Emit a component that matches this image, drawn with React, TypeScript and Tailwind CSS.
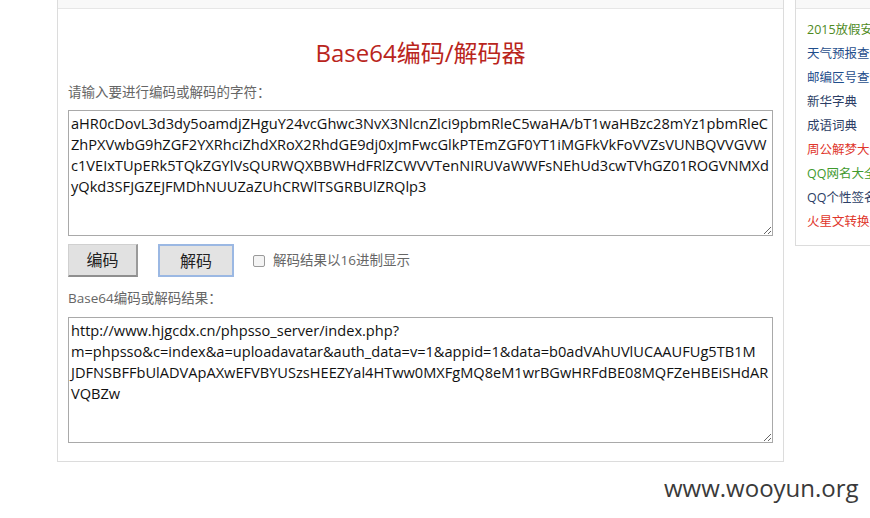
import React from "react";

const input = [
  "aHR0cDovL3d3dy5oamdjZHguY24vcGhwc3NvX3NlcnZlci9pbmRleC5waHA/bT1waHBzc28mYz1pbmRleC",
  "ZhPXVwbG9hZGF2YXRhciZhdXRoX2RhdGE9dj0xJmFwcGlkPTEmZGF0YT1iMGFkVkFoVVZsVUNBQVVGVW",
  "c1VEIxTUpERk5TQkZGYlVsQURWQXBBWHdFRlZCWVVTenNIRUVaWWFsNEhUd3cwTVhGZ01ROGVNMXd",
  "yQkd3SFJGZEJFMDhNUUZaZUhCRWlTSGRBUlZRQlp3",
].join("\n");

const output = [
  "http://www.hjgcdx.cn/phpsso_server/index.php?",
  "m=phpsso&c=index&a=uploadavatar&auth_data=v=1&appid=1&data=b0adVAhUVlUCAAUFUg5TB1M",
  "JDFNSBFFbUlADVApAXwEFVBYUSzsHEEZYal4HTww0MXFgMQ8eM1wrBGwHRFdBE08MQFZeHBEiSHdAR",
  "VQBZw",
].join("\n");

const links: [string, string][] = [
  ["2015放假安排", "#4f8a1e"],
  ["天气预报查询", "#1f4e8c"],
  ["邮编区号查询", "#1f4e8c"],
  ["新华字典", "#2c3e66"],
  ["成语词典", "#2c3e66"],
  ["周公解梦大全", "#e0362b"],
  ["QQ网名大全", "#3f9a2e"],
  ["QQ个性签名", "#2c3e66"],
  ["火星文转换器", "#e0362b"],
];

const font = { fontFamily: '"Open Sans", "Noto Sans CJK SC", sans-serif' };

export default function App() {
  return (
    <div className="relative w-[870px] h-[518px] bg-white overflow-hidden" style={font}>
      <div className="flex items-start">
        {/* main panel */}
        <div className="ml-[57px] w-[728px] h-[462px] border-x border-b border-[#dcdcdc] flex flex-col">
          <div className="h-[9px] bg-[#f8f8f8] border-b border-[#e6e6e6]" />
          <div className="px-[10px] flex flex-col">
            <div className="mt-[27px] h-[34px] text-center text-[24px] leading-[34px] text-[#b9251c]">
              Base64编码/解码器
            </div>
            <div className="mt-[12px] text-[13.5px] leading-[20px] text-[#666]">请输入要进行编码或解码的字符：</div>
            <textarea
              readOnly
              defaultValue={input}
              wrap="off"
              className="mt-[8px] w-[705px] h-[126px] border border-[#a9a9a9] px-[2px] pt-[2px] text-[14.6px] leading-[21px] text-[#111] whitespace-pre overflow-hidden outline-none"
              style={{ resize: "vertical" }}
            />
            <div className="mt-[8px] flex items-center">
              <button className="w-[70px] h-[33px] bg-[#e1e1e1] border border-[#d0d0d0] border-r-[#9a9a9a] border-b-[#8f8f8f] border-r-2 border-b-2 text-[16px] text-[#222]">
                编码
              </button>
              <button className="ml-[20px] w-[76px] h-[33px] bg-[#e3e3e3] border-2 border-[#9bb8e3] text-[16px] text-[#222]">
                解码
              </button>
              <span className="ml-[19px] w-[12px] h-[12px] border border-[#9a9a9a] rounded-[2px] bg-[#f4f4f4]" />
              <span className="ml-[8px] text-[13.5px] text-[#666]">解码结果以16进制显示</span>
            </div>
            <div className="mt-[11px] text-[13.5px] leading-[20px] text-[#666]">Base64编码或解码结果：</div>
            <textarea
              readOnly
              defaultValue={output}
              wrap="off"
              className="mt-[9px] w-[705px] h-[126px] border border-[#a9a9a9] px-[2px] pt-[2px] text-[14.6px] leading-[21px] text-[#111] whitespace-pre overflow-hidden outline-none"
              style={{ resize: "vertical" }}
            />
          </div>
        </div>
        {/* sidebar */}
        <div className="ml-[11px] w-[120px] h-[246px] border-l border-b border-[#dcdcdc] shrink-0 flex flex-col">
          <div className="h-[9px] bg-[#f8f8f8] border-b border-[#e6e6e6]" />
          <div className="pl-[11px] pt-[11px] flex flex-col">
            {links.map(([t, c]) => (
              <div key={t} className="h-[24px] leading-[20px] text-[12.5px] whitespace-nowrap" style={{ color: c }}>
                {t}
              </div>
            ))}
          </div>
        </div>
      </div>
      <div className="absolute left-[664px] top-[473px] text-[24px] leading-[30px] text-[#3a3a3a]">www.wooyun.org</div>
    </div>
  );
}
